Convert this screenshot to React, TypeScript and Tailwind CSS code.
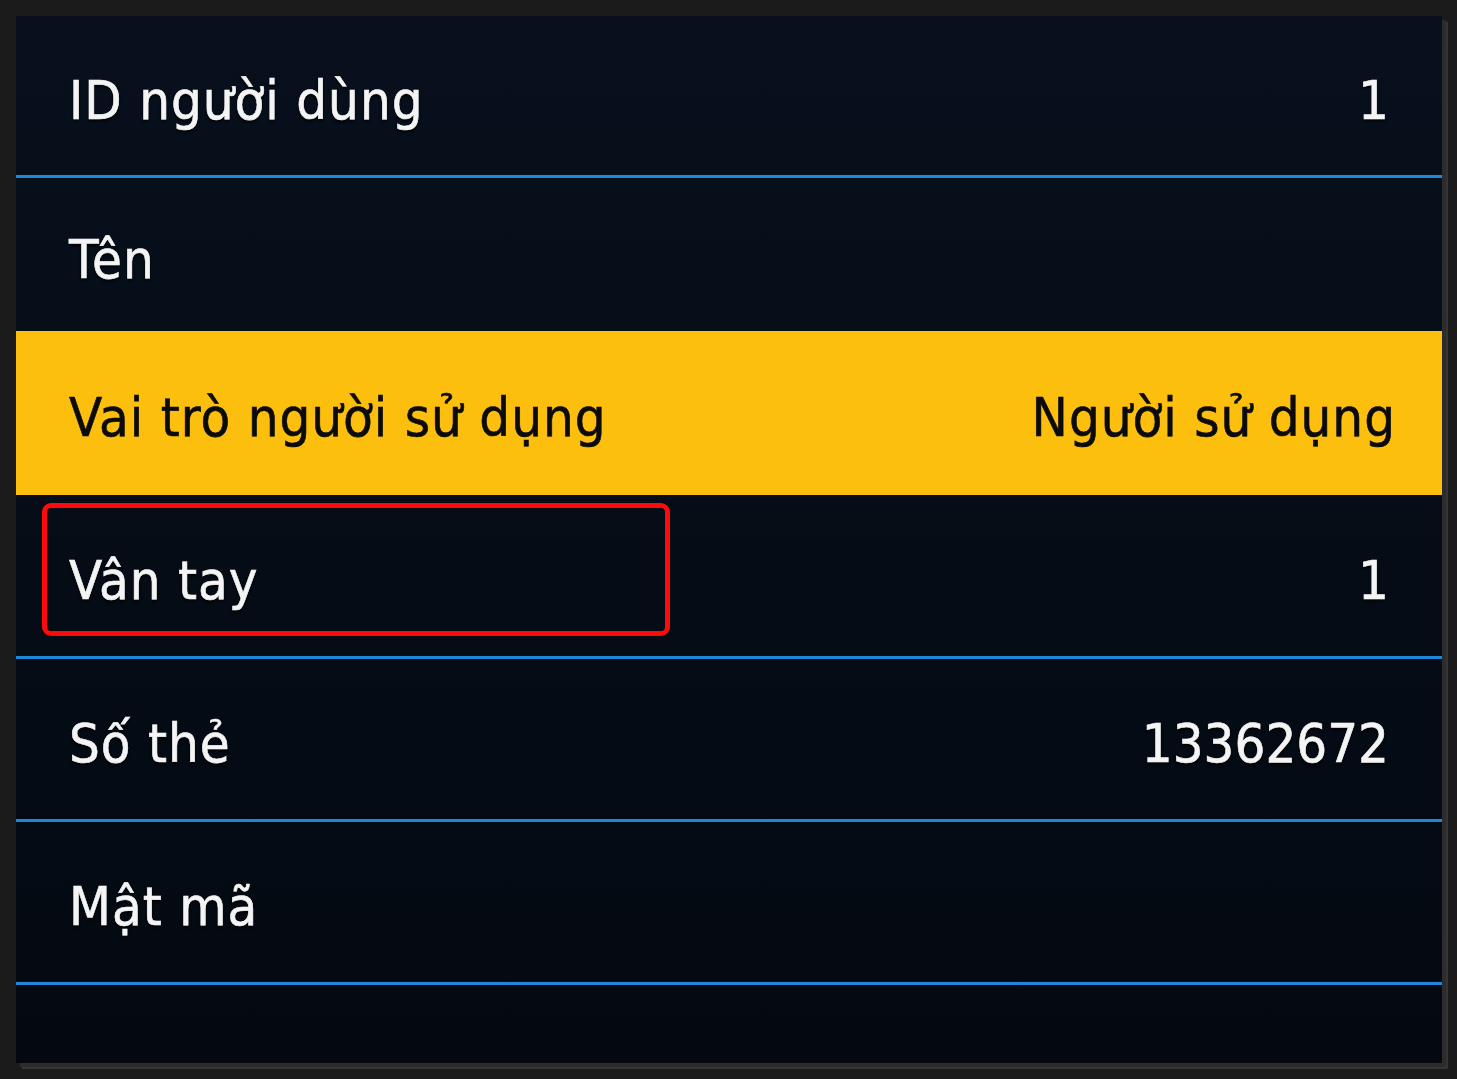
import React from "react";

type Row = {
  label: string;
  value?: string;
  height: string;
  divider?: boolean;
  active?: boolean;
  marked?: boolean;
};

const rows: Row[] = [
  { label: "ID người dùng", value: "1", height: "h-[162px]", divider: true },
  { label: "Tên", height: "h-[153px]" },
  { label: "Vai trò người sử dụng", value: "Người sử dụng", height: "h-[164px]", active: true },
  { label: "Vân tay", value: "1", height: "h-[164px]", divider: true, marked: true },
  { label: "Số thẻ", value: "13362672", height: "h-[163px]", divider: true },
  { label: "Mật mã", height: "h-[163px]", divider: true },
];

function SettingRow({ row }: { row: Row }) {
  const text = row.active
    ? "text-[#0b0b0b] [-webkit-text-stroke:0.6px_#0b0b0b]"
    : "text-[#f4f4f4] [-webkit-text-stroke:0.6px_#f4f4f4] [text-shadow:0_2px_3px_rgba(0,0,0,0.9)]";
  const numeric = row.value !== undefined && /^\d+$/.test(row.value);
  return (
    <div
      className={`relative flex flex-none items-center justify-between pl-[53px] pr-[46px] pt-[10px] ${row.height} ${
        row.active ? "bg-[#fdbf0d]" : ""
      } ${row.divider ? "border-b-[3px] border-[#1d87dc]" : ""}`}
    >
      <span className={`leading-none tracking-[1px] ${text}`}>{row.label}</span>
      {row.value && (
        <span
          className={`leading-none ${numeric ? "mr-[7px]" : "tracking-[1px]"} ${text}`}
        >
          {row.value}
        </span>
      )}
      {row.marked && (
        <div className="pointer-events-none absolute left-[26px] top-[8px] h-[133px] w-[628px] rounded-[9px] border-[5px] border-[#ff0a0a]" />
      )}
    </div>
  );
}

export default function App() {
  return (
    <div className="h-[1079px] w-[1457px] overflow-hidden bg-[#1b1b1b] pb-[16px] pl-[16px] pr-[15px] pt-[16px]">
      <div className="h-full w-full rounded-br-[2px] shadow-[4px_4px_0_#2c2c2c,6px_6px_0_#353535]">
        <div className="flex h-full w-full flex-col bg-[linear-gradient(#07101c,#040911)] font-['DejaVu_Sans_Condensed','DejaVu_Sans',sans-serif] text-[54px] font-stretch-condensed">
          {rows.map((row) => (
            <SettingRow key={row.label} row={row} />
          ))}
          <div className="flex-1" />
        </div>
      </div>
    </div>
  );
}
